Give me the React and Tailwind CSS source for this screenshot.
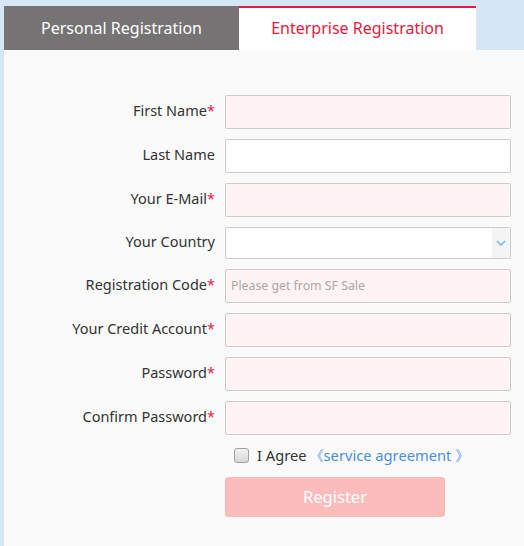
import React from "react";

const fields = [
  { label: "First Name", req: true },
  { label: "Last Name", req: false, white: true },
  { label: "Your E-Mail", req: true },
  { label: "Your Country", req: false, select: true },
  { label: "Registration Code", req: true, placeholder: "Please get from SF Sale" },
  { label: "Your Credit Account", req: true },
  { label: "Password", req: true },
  { label: "Confirm Password", req: true },
];

export default function App() {
  return (
    <div
      className="w-[524px] h-[546px] bg-[#d5e6f4] pt-[6px] pl-[4px] flex flex-col overflow-hidden"
      style={{ fontFamily: '"Noto Sans", "Open Sans", sans-serif' }}
    >
      <div className="flex h-[44px] shrink-0">
        <div className="w-[235px] bg-[#757373] text-white text-[16px] flex items-center justify-center">
          Personal Registration
        </div>
        <div className="w-[237px] bg-white border-t-2 border-[#e8193c] text-[#e8193c] text-[16px] flex items-center justify-center pb-[2px]">
          Enterprise Registration
        </div>
      </div>
      <div className="flex-1 bg-[#fafafa] pt-[45px]">
        <div className="flex flex-col gap-[10px]">
          {fields.map((f) => (
            <div key={f.label} className={"flex items-center " + (f.select ? "h-[32px]" : "h-[34px]")}>
              <div className="w-[211px] text-right text-[14.5px] text-[#333] leading-none pb-[3px]">
                {f.label}
                {f.req && <span className="text-[#e8193c]">*</span>}
              </div>
              <div className={"ml-[10px] w-[286px] " + (f.select ? "h-[32px]" : "h-[34px]")}>
                {f.select ? (
                  <div className="w-full h-full border border-[#cccccc] rounded-[2px] bg-white flex justify-end">
                    <div className="w-[18px] h-full bg-[#f4f4f4] flex items-center justify-center">
                      <svg width="10" height="6" viewBox="0 0 10 6">
                        <path d="M1 1 L5 5 L9 1" fill="none" stroke="#74b9ef" strokeWidth="1.6" />
                      </svg>
                    </div>
                  </div>
                ) : (
                  <div
                    className={
                      "w-full h-full border border-[#cccccc] rounded-[2px] flex items-center px-[5px] text-[12.3px] text-[#a9a9a9] " +
                      (f.white ? "bg-white" : "bg-[#fff3f3]")
                    }
                  >
                    {f.placeholder || ""}
                  </div>
                )}
              </div>
            </div>
          ))}
        </div>
        <div className="flex items-center ml-[230px] mt-[10px] h-[20px]">
          <div className="w-[15px] h-[15px] rounded-[3px] border border-[#a0a0a0] bg-gradient-to-b from-[#f2f2f2] to-[#d8d8d8]" />
          <span className="ml-[8px] text-[14.7px] text-[#333]">I Agree</span>
          <span className="ml-[2px] text-[14.7px] text-[#4a8fe0]">《service agreement 》</span>
        </div>
        <div className="ml-[221px] mt-[12px] w-[220px] h-[40px] rounded-[3px] bg-[#fcbcbb] text-white text-[16.5px] flex items-center justify-center">
          Register
        </div>
      </div>
    </div>
  );
}
